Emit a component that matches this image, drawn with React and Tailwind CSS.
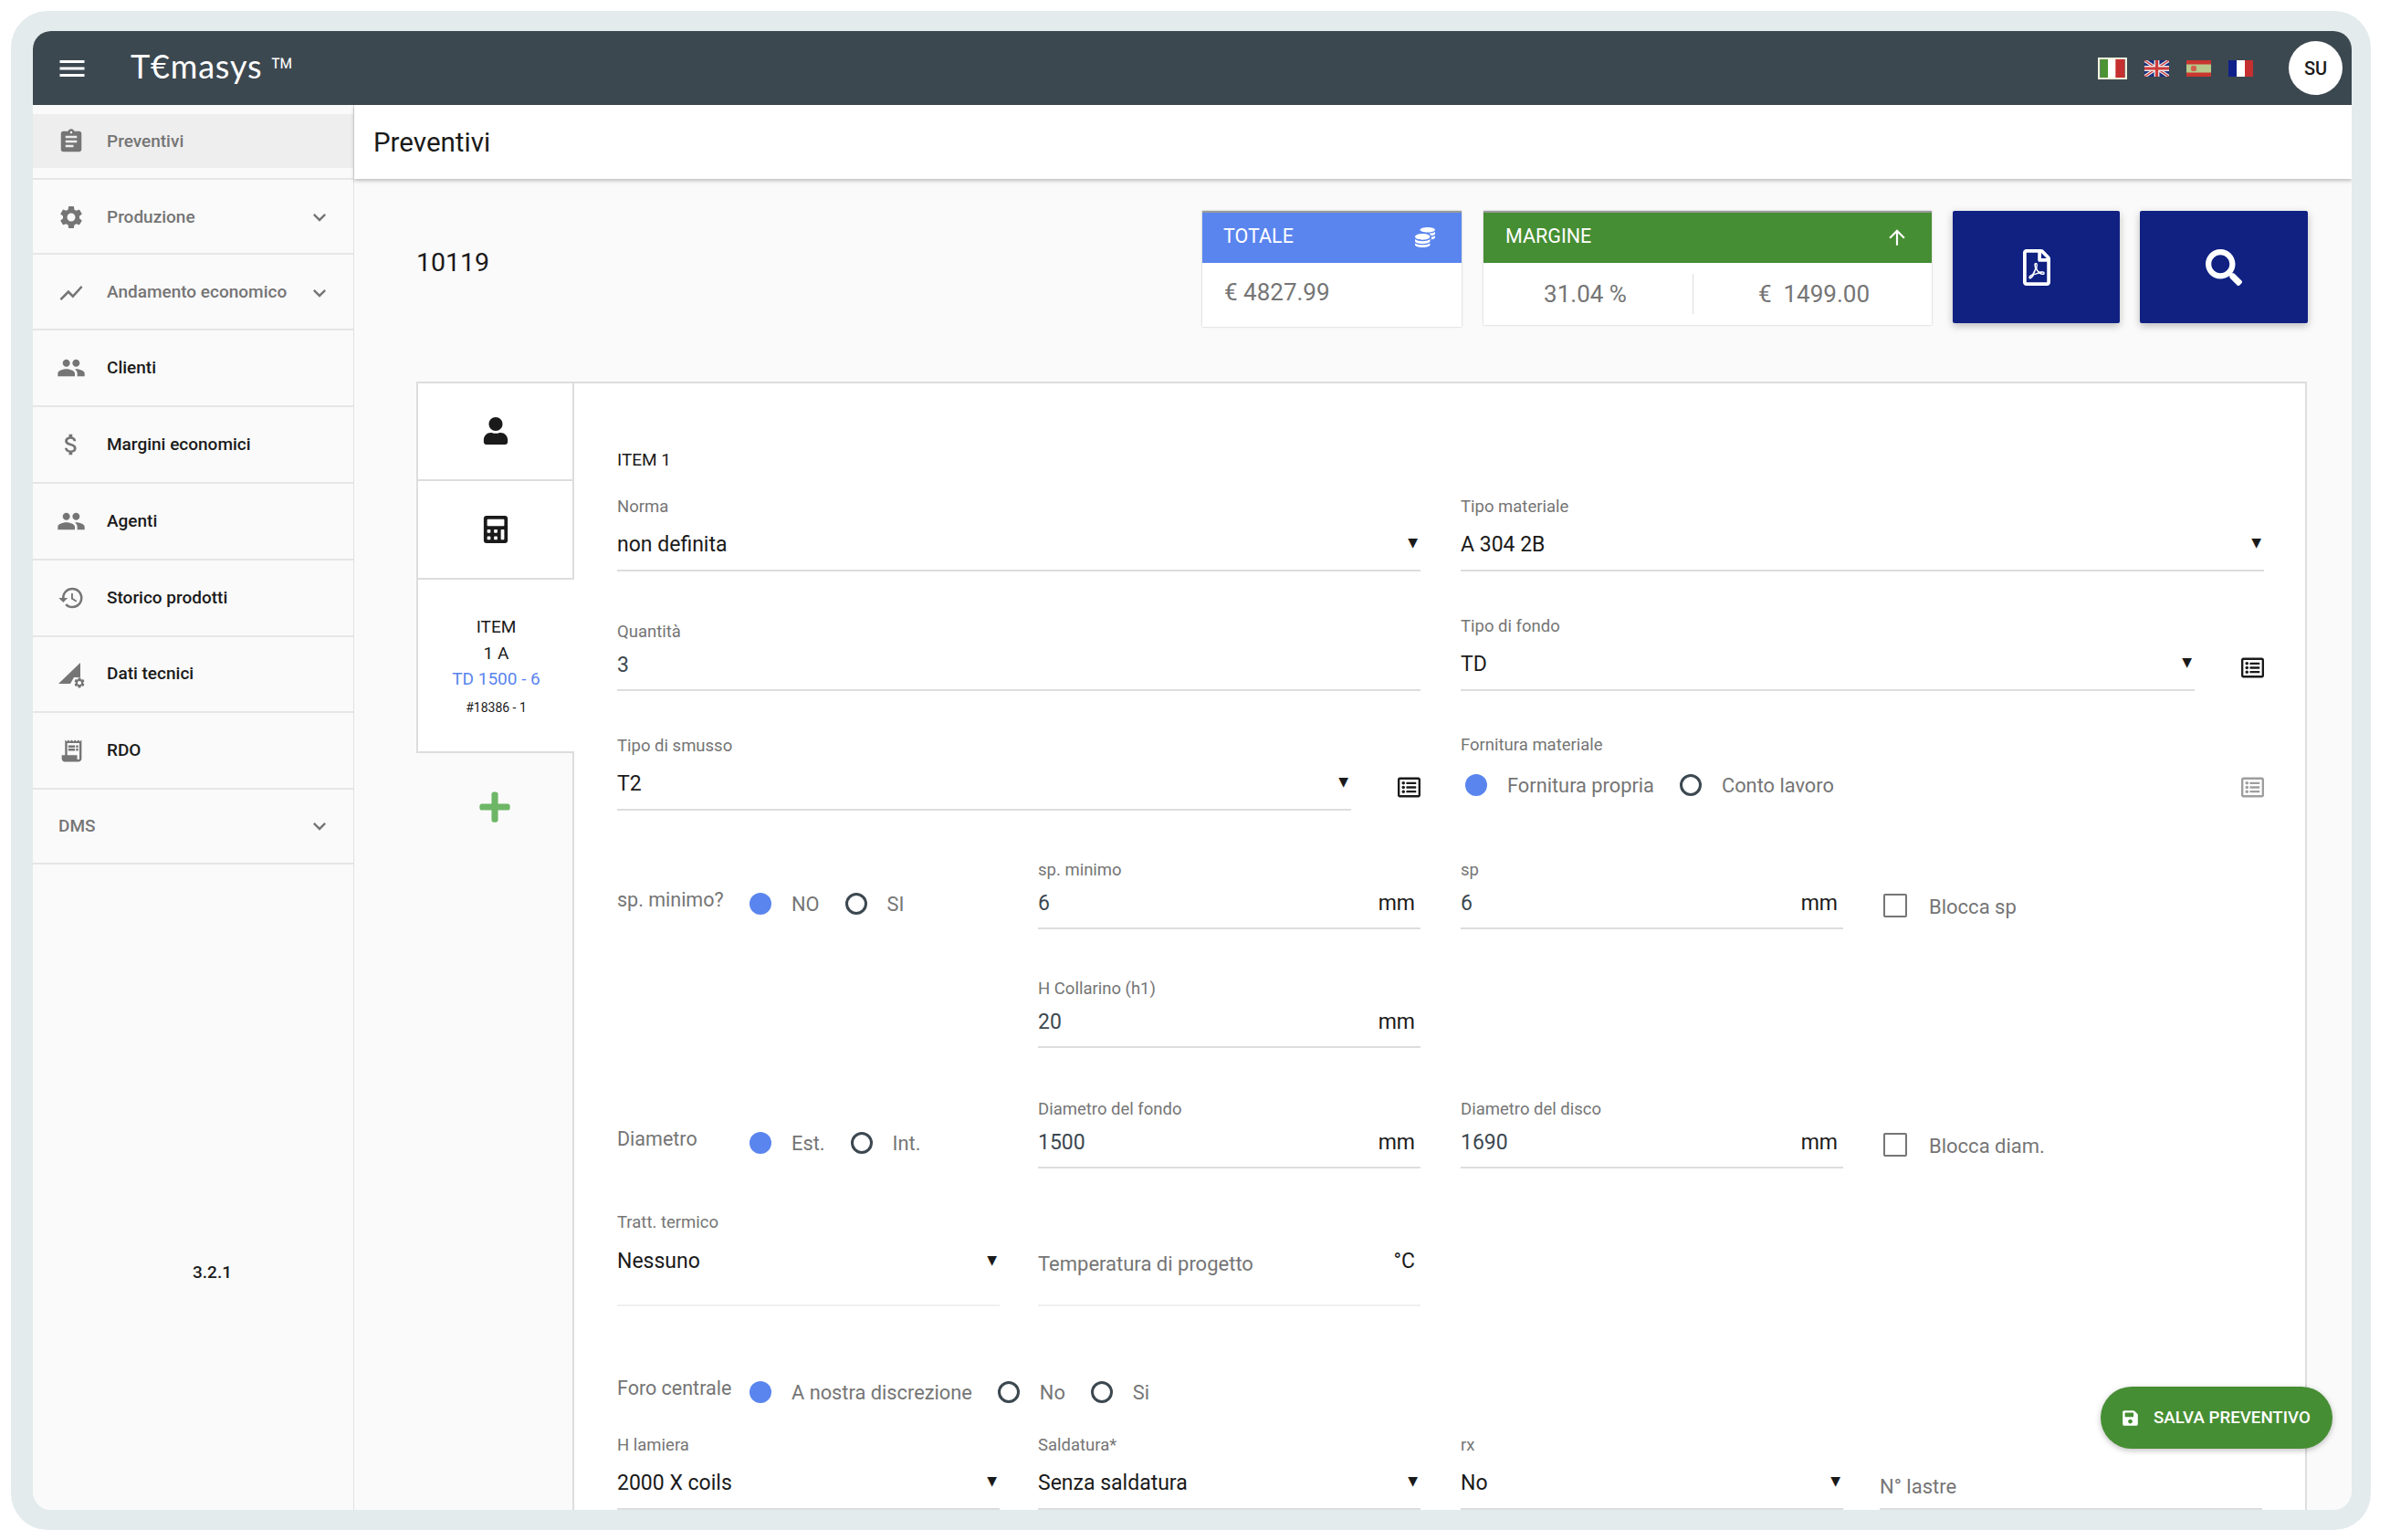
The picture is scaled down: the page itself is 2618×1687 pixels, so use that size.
import { FaCalculator, FaCoins, FaPlus, FaRegFilePdf, FaRegListAlt, FaSave, FaSearch, FaUser } from 'react-icons/fa'
import {
  MdArrowUpward,
  MdAssignment,
  MdAttachMoney,
  MdExpandMore,
  MdHistory,
  MdMenu,
  MdPeople,
  MdReceiptLong,
  MdSettings,
  MdShowChart,
} from 'react-icons/md'

function DatiTecniciIcon() {
  return (
    <span className="relative block w-[30px] h-[30px]">
      <svg viewBox="0 0 30 30" className="w-[30px] h-[30px]" fill="#757575">
        <path d="M1 25 L25 2 V18 L18 18 L14 25 Z" />
      </svg>
      <MdSettings className="absolute right-[-1px] bottom-[-1px] text-[14px] text-[#757575]" />
    </span>
  )
}

const navItems = [
  { label: 'Produzione', icon: <MdSettings className="text-[30px]" />, chevron: true, h: 'h-[82px] pt-[2px]', muted: true },
  { label: 'Andamento economico', icon: <MdShowChart className="text-[30px]" />, chevron: true, h: 'h-[83px] pt-[2px]', muted: true },
  { label: 'Clienti', icon: <MdPeople className="text-[32px]" />, h: 'h-[84px]' },
  { label: 'Margini economici', icon: <MdAttachMoney className="text-[30px]" />, h: 'h-[84px]' },
  { label: 'Agenti', icon: <MdPeople className="text-[32px]" />, h: 'h-[84px]' },
  { label: 'Storico prodotti', icon: <MdHistory className="text-[30px]" />, h: 'h-[84px]' },
  { label: 'Dati tecnici', icon: <DatiTecniciIcon />, h: 'h-[83px]' },
  { label: 'RDO', icon: <MdReceiptLong className="text-[29px]" />, h: 'h-[84px]' },
]

function NavRow({ item }) {
  return (
    <div className={`${item.h} flex items-center border-b-2 border-[#e6e6e6] pr-[23px]`}>
      <span className="w-[84px] -mr-[3px] flex justify-center text-[#757575]">{item.icon}</span>
      <span className={`flex-1 text-[19px] font-medium ${item.muted ? 'text-[#757575]' : 'text-[#1a1a1a]'}`}>{item.label}</span>
      {item.chevron && <MdExpandMore className="text-[28px] text-[#757575]" />}
    </div>
  )
}

function Sidebar() {
  return (
    <aside className="w-[352px] shrink-0 border-r border-[#e0e0e0] bg-[#fafafa]">
      <div className="h-[82px] pt-[10px] border-b-2 border-[#e6e6e6]">
        <div className="h-[59px] bg-[#eeeeee] flex items-center pt-[1px]">
          <span className="w-[84px] -mr-[3px] flex justify-center text-[#757575]">
            <MdAssignment className="text-[30px]" />
          </span>
          <span className="text-[19px] font-medium text-[#757575]">Preventivi</span>
        </div>
      </div>
      {navItems.map((item) => (
        <NavRow key={item.label} item={item} />
      ))}
      <div className="h-[82px] flex items-center border-b-2 border-[#e6e6e6] pl-[28px] pr-[23px]">
        <span className="flex-1 text-[19px] font-medium text-[#757575]">DMS</span>
        <MdExpandMore className="text-[28px] text-[#757575]" />
      </div>
      <div className="mt-[433px] pl-[42px] text-center text-[19px] font-medium text-[#1a1a1a]">3.2.1</div>
    </aside>
  )
}

function Flags() {
  return (
    <div className="flex items-center">
      <svg viewBox="0 0 32 24" className="w-[32px] h-[24px] border-2 border-[#eef3dc]">
        <rect width="32" height="24" fill="#fff" />
        <rect width="10" height="24" fill="#4a9433" />
        <rect x="20" width="12" height="24" fill="#c52f2f" />
      </svg>
      <svg viewBox="0 0 60 40" className="w-[27px] h-[18px] ml-[19px]">
        <rect width="60" height="40" fill="#1b2f80" />
        <path d="M0 0 L60 40 M60 0 L0 40" stroke="#e6e6e6" strokeWidth="8" />
        <path d="M0 0 L60 40 M60 0 L0 40" stroke="#cf3a3a" strokeWidth="3" />
        <path d="M30 0 V40 M0 20 H60" stroke="#e6e6e6" strokeWidth="13" />
        <path d="M30 0 V40 M0 20 H60" stroke="#cf3a3a" strokeWidth="7" />
      </svg>
      <svg viewBox="0 0 27 18" className="w-[27px] h-[18px] ml-[19px]">
        <rect width="27" height="18" fill="#c9362f" />
        <rect y="4.5" width="27" height="9" fill="#b7c98c" />
        <rect x="5" y="6" width="6" height="6" rx="2" fill="#d2604a" />
      </svg>
      <svg viewBox="0 0 27 18" className="w-[27px] h-[18px] ml-[19px]">
        <rect width="27" height="18" fill="#fff" />
        <rect width="9" height="18" fill="#10208a" />
        <rect x="18" width="9" height="18" fill="#c52f2f" />
      </svg>
    </div>
  )
}

function Topbar() {
  return (
    <header className="h-[81px] shrink-0 bg-[#3c4850] flex items-center pl-[25px] pr-[10px]">
      <MdMenu className="text-[36px] text-white" />
      <div className="ml-[46px] mb-[2px] flex items-start text-white font-['Lato',sans-serif]">
        <span className="text-[36px] leading-none tracking-[0.8px]">T€masys</span>
        <span className="ml-[8px] h-[36px] mt-[4px] text-[44px] leading-none font-['Roboto',sans-serif] font-light">™</span>
      </div>
      <div className="flex-1" />
      <Flags />
      <div className="ml-[39px] w-[59px] h-[59px] rounded-full bg-white flex items-center justify-center text-[20px] font-medium text-[#1a1a1a]">
        SU
      </div>
    </header>
  )
}

function StatCards() {
  return (
    <div className="flex mt-[35px] h-[126px] pl-[68px] pr-[48px]">
      <div className="flex-1 pt-[40px] text-[28.5px] leading-[34px] text-[#1a1a1a]">10119</div>
      <div className="w-[284px] h-[127px] bg-white border-t-2 border-[#9a9a9a] shadow-[0_0_2px_#00000040]">
        <div className="h-[55px] bg-[#5a85ee] flex items-center justify-between pl-[23px] pr-[29px] pb-[2px] text-white text-[21.5px]">
          TOTALE
          <FaCoins className="text-[22px]" />
        </div>
        <div className="h-[70px] flex items-center pl-[24px] pb-[6px] text-[26px] text-[#757575]">€ 4827.99</div>
      </div>
      <div className="ml-[24px] w-[491px] h-[125px] bg-white border-t-2 border-[#9a9a9a] shadow-[0_0_2px_#00000040]">
        <div className="h-[55px] bg-[#468e33] flex items-center justify-between pl-[24px] pr-[25px] pb-[2px] text-white text-[21.5px]">
          MARGINE
          <MdArrowUpward className="text-[26px]" />
        </div>
        <div className="h-[68px] flex items-center text-[26px] text-[#757575]">
          <div className="w-[229px] pr-[6px] text-center">31.04 %</div>
          <div className="w-px h-[44px] bg-[#dddddd]" />
          <div className="flex-1 pl-[3px] text-center">€&nbsp;&nbsp;1499.00</div>
        </div>
      </div>
      <button className="ml-[23px] w-[183px] h-[123px] bg-[#102182] rounded-[2px] flex items-center justify-center text-white shadow-[0_3px_8px_#00000040]">
        <FaRegFilePdf className="text-[40px]" />
      </button>
      <button className="ml-[22px] w-[184px] h-[123px] bg-[#102182] rounded-[2px] flex items-center justify-center text-white shadow-[0_3px_8px_#00000040]">
        <FaSearch className="text-[40px]" />
      </button>
    </div>
  )
}

function Tabs() {
  return (
    <div className="w-[173px] shrink-0 flex flex-col">
      <div className="h-[109px] pb-[2px] bg-white border-l-2 border-t-2 border-r-2 border-b-2 border-[#dddddd] flex items-center justify-center">
        <FaUser className="text-[30px] text-[#1a1a1a]" />
      </div>
      <div className="h-[108px] bg-white border-l-2 border-r-2 border-b-2 border-[#dddddd] flex items-center justify-center">
        <FaCalculator className="text-[30px] text-[#1a1a1a]" />
      </div>
      <div className="h-[190px] bg-white border-l-2 border-b-2 border-[#dddddd] flex flex-col items-center pt-[38px] text-[19px] leading-[28.5px] text-[#1a1a1a]">
        <span>ITEM</span>
        <span>1 A</span>
        <span className="text-[#5a85ee]">TD 1500 - 6</span>
        <span className="text-[14px] leading-[32px]">#18386 - 1</span>
      </div>
      <div className="flex-1 border-r-2 border-[#dddddd] flex justify-center pt-[40px]">
        <FaPlus className="text-[38px] text-[#6db666]" />
      </div>
    </div>
  )
}

function Select({ label, value, className = 'w-[419px]' }) {
  return (
    <div className={className}>
      <div className="h-6 leading-6 text-[18.5px] text-[#757575]">{label}</div>
      <div className="mt-[9px] h-[50px] flex items-start justify-between border-b-2 border-[#dddddd]">
        <span className="h-[30px] mt-[6px] leading-[30px] text-[23px] text-[#1a1a1a]">{value}</span>
        <span className="mt-[3px] mr-[3px] leading-[30px] text-[14px] text-[#1a1a1a] font-['DejaVu_Sans',sans-serif]">▼</span>
      </div>
    </div>
  )
}

function Input({ label, value, suffix = 'mm', className = 'w-[419px]' }) {
  return (
    <div className={className}>
      <div className="h-6 leading-6 text-[18.5px] text-[#757575]">{label}</div>
      <div className="mt-[3px] h-[50px] pt-[7px] flex items-start justify-between border-b-2 border-[#dddddd] text-[23px] leading-[30px] text-[#3c4850]">
        <span>{value}</span>
        {suffix && <span className="mr-[6px] text-[#1a1a1a]">{suffix}</span>}
      </div>
    </div>
  )
}

function ListIcon({ muted }) {
  return <FaRegListAlt className={`mb-[13px] text-[25px] ${muted ? 'text-[#9e9e9e]' : 'text-[#1a1a1a]'}`} />
}

function Radio({ label, on }) {
  return (
    <div className="flex items-center gap-[22px]">
      <span className={on ? 'w-6 h-6 rounded-full bg-[#5a85ee]' : 'w-6 h-6 rounded-full border-[3px] border-[#3c4850]'} />
      <span className="text-[21.8px] text-[#757575] mt-[2px]">{label}</span>
    </div>
  )
}

function RadioGroup({ title, options, pad = 'pb-[8px]' }) {
  return (
    <div className={`flex items-center ${pad}`}>
      <div className="w-[145px] mb-[8px] text-[21.5px] text-[#757575]">{title}</div>
      <div className="flex items-center gap-[28px]">
        {options.map((o) => (
          <Radio key={o.label} label={o.label} on={o.on} />
        ))}
      </div>
    </div>
  )
}

function Check({ label }) {
  return (
    <div className="flex items-center gap-[24px] ml-[4px] pb-[8px]">
      <span className="w-[26px] h-[26px] border-2 border-[#757575] rounded-[2px]" />
      <span className="mt-[3px] text-[22px] text-[#757575]">{label}</span>
    </div>
  )
}

function Form() {
  const row = 'grid grid-cols-[461px_463px_459px_419px] items-end'
  return (
    <div className="flex-1 bg-white border-t-2 border-r-2 border-[#dddddd] pl-[47px] pt-[73px]">
      <div className="h-[22px] leading-[22px] text-[19px] text-[#1a1a1a]">ITEM 1</div>

      <div className={`${row} h-[111px]`}>
        <Select label="Norma" value="non definita" className="col-span-2 w-[880px]" />
        <Select label="Tipo materiale" value="A 304 2B" className="col-span-2 w-[880px]" />
      </div>

      <div className={`${row} h-[131px]`}>
        <Input label="Quantità" value="3" suffix="" className="col-span-2 w-[880px]" />
        <div className="col-span-2 w-[880px] flex items-end gap-[51px]">
          <Select label="Tipo di fondo" value="TD" className="flex-1" />
          <ListIcon />
        </div>
      </div>

      <div className={`${row} h-[131px]`}>
        <div className="col-span-2 w-[880px] flex items-end gap-[51px]">
          <Select label="Tipo di smusso" value="T2" className="flex-1" />
          <ListIcon />
        </div>
        <div className="col-span-2 w-[880px]">
          <div className="h-6 leading-6 text-[18.5px] text-[#757575]">Fornitura materiale</div>
          <div className="mt-[18px] flex items-end justify-between">
            <div className="pl-[5px]">
              <div className="flex items-center gap-[28px] h-[28px] mb-[14px]">
                <Radio label="Fornitura propria" on />
                <Radio label="Conto lavoro" />
              </div>
            </div>
            <ListIcon muted />
          </div>
        </div>
      </div>

      <div className={`${row} h-[130px]`}>
        <RadioGroup title="sp. minimo?" options={[{ label: 'NO', on: true }, { label: 'SI' }]} />
        <Input label="sp. minimo" value="6" />
        <Input label="sp" value="6" />
        <Check label="Blocca sp" />
      </div>

      <div className={`${row} h-[130px]`}>
        <div />
        <Input label="H Collarino (h1)" value="20" />
      </div>

      <div className={`${row} h-[132px]`}>
        <RadioGroup title="Diametro" options={[{ label: 'Est.', on: true }, { label: 'Int.' }]} />
        <Input label="Diametro del fondo" value="1500" />
        <Input label="Diametro del disco" value="1690" />
        <Check label="Blocca diam." />
      </div>

      <div className={`${row} h-[151px]`}>
        <div className="w-[419px]">
          <div className="h-6 leading-6 text-[18.5px] text-[#757575]">Tratt. termico</div>
          <div className="mt-[9px] h-[71px] flex items-start justify-between border-b-2 border-[#f0f0f0]">
            <span className="h-[30px] mt-[7px] leading-[30px] text-[23px] text-[#1a1a1a]">Nessuno</span>
            <span className="mt-[5px] mr-[3px] leading-[30px] text-[14px] text-[#1a1a1a] font-['DejaVu_Sans',sans-serif]">▼</span>
          </div>
        </div>
        <div className="w-[419px] h-[70px] pt-[4px] pr-[6px] flex items-start justify-between border-b-2 border-[#f0f0f0] text-[22px]">
          <span className="mt-[3px] text-[#757575]">Temperatura di progetto</span>
          <span className="text-[23px] text-[#1a1a1a]">°C</span>
        </div>
      </div>

      <div className={`${row} h-[123px]`}>
        <div className="col-span-3">
          <RadioGroup
            title="Foro centrale"
            pad="pb-[9px]"
            options={[{ label: 'A nostra discrezione', on: true }, { label: 'No' }, { label: 'Si' }]}
          />
        </div>
      </div>

      <div className={`${row} h-[100px]`}>
        <Select label="H lamiera" value="2000 X coils" />
        <Select label="Saldatura*" value="Senza saldatura" />
        <Select label="rx" value="No" />
        <div className="w-[419px] h-[50px] pt-[8px] border-b-2 border-[#dddddd] text-[22px] text-[#757575]">N° lastre</div>
      </div>
    </div>
  )
}

export default function App() {
  return (
    <div className="relative w-[2618px] h-[1687px] bg-white pt-3 pl-3 pr-[21px] pb-[11px] font-['Roboto',sans-serif]">
      <div className="h-full bg-[#e3ebec] rounded-[40px] pl-6 pt-[22px] pr-[21px] pb-[22px]">
        <div className="relative h-full rounded-[20px] overflow-hidden bg-[#fafafa] flex flex-col">
          <Topbar />
          <div className="flex-1 flex min-h-0">
            <Sidebar />
            <main className="flex-1 min-w-0 flex flex-col">
              <div className="h-[81px] shrink-0 bg-white flex items-center pl-[21px] pt-[1px] text-[29.5px] text-[#1a1a1a] shadow-[0_2px_4px_#00000040]">
                Preventivi
              </div>
              <StatCards />
              <div className="flex-1 flex ml-[68px] mr-[49px] mt-[61px] min-h-0">
                <Tabs />
                <Form />
              </div>
            </main>
          </div>
          <button className="absolute right-[21px] bottom-[67px] w-[254px] h-[68px] rounded-full bg-[#468e33] flex items-center pl-[23px] gap-[16px] text-white text-[18.7px] font-medium shadow-[0_2px_6px_#00000040]">
            <FaSave className="text-[19px]" />
            SALVA PREVENTIVO
          </button>
        </div>
      </div>
    </div>
  )
}
